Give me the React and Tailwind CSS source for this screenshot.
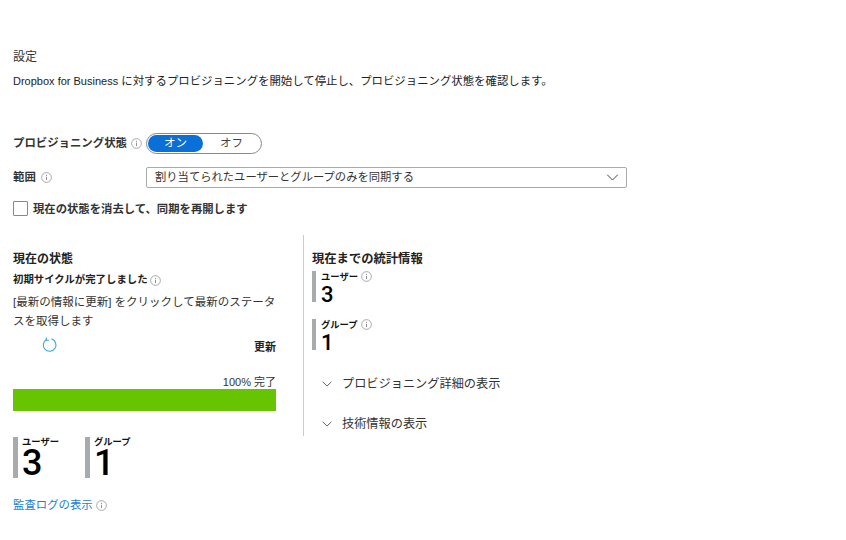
import React from 'react';

const FONT = "font-['Liberation_Sans','Noto_Sans_CJK_JP',sans-serif]";
const NUM = "font-['Roboto',sans-serif]";

function InfoIcon({ className = '' }) {
  return (
    <svg viewBox="0 0 12 12" className={`w-[11px] h-[11px] shrink-0 ${className}`} fill="none">
      <circle cx="6" cy="6" r="5.3" stroke="#8a8a8a" strokeWidth="0.8" />
      <circle cx="6" cy="3.6" r="0.6" fill="#777" />
      <path d="M6 5.2v3.6" stroke="#777" strokeWidth="0.9" />
    </svg>
  );
}

function Chevron({ className = '' }) {
  return (
    <svg viewBox="0 0 12 7" className={className} fill="none">
      <path d="M0.7 0.7 6 6l5.3-5.3" stroke="#444" strokeWidth="1" />
    </svg>
  );
}

function BigStat({ label, value, className = '' }) {
  return (
    <div className={`flex h-[41px] border-l-[5px] border-[#a7abae] pl-1 ${className}`}>
      <div className="flex flex-col">
        <span className="text-[9.3px] leading-[11px] font-bold text-[#111]">{label}</span>
        <span className={`text-[36px] leading-[30px] font-medium text-black ${NUM}`}>{value}</span>
      </div>
    </div>
  );
}

function SmallStat({ label, value, className = '' }) {
  return (
    <div className={`flex h-[31px] border-l-[4px] border-[#a7abae] pl-[5px] ${className}`}>
      <div className="flex flex-col">
        <span className="flex items-center gap-[3px] text-[9.3px] leading-[10px] font-bold text-[#111]">
          {label}
          <InfoIcon />
        </span>
        <span className={`mt-[3px] text-[22px] leading-[19px] font-medium text-black ${NUM}`}>{value}</span>
      </div>
    </div>
  );
}

function Expander({ label, className = '' }) {
  return (
    <div className={`flex items-center pl-[10px] ${className}`}>
      <Chevron className="w-[10px] h-[6px]" />
      <span className="ml-[10px] text-[12.2px] leading-[18px] text-[#333]">{label}</span>
    </div>
  );
}

export default function App() {
  return (
    <div className={`w-[846px] h-[540px] bg-white overflow-hidden pl-[13px] pt-[48px] text-[#222] ${FONT}`}>
      <div className="text-[12px] leading-[18px] text-[#333]">設定</div>
      <div className="mt-[6px] text-[11.4px] leading-[18px] text-[#222]">
        <span className="text-[11px]">Dropbox for Business</span> に対するプロビジョニングを開始して停止し、プロビジョニング状態を確認します。
      </div>

      {/* provisioning status */}
      <div className="flex items-center mt-[43px] h-[21px]">
        <div className="w-[133px] flex items-center gap-1">
          <span className="text-[11.4px] font-bold text-[#333] whitespace-nowrap">プロビジョニング状態</span>
          <InfoIcon />
        </div>
        <div className="flex w-[116px] h-[21px] rounded-full border border-[#8a8a8a] p-[1px] text-[11.5px] leading-[17px]">
          <div className="w-[55px] rounded-full bg-[#0a6fd6] text-white text-center">オン</div>
          <div className="flex-1 text-center text-[#444]">オフ</div>
        </div>
      </div>

      {/* scope */}
      <div className="flex items-center mt-[13px] h-[21px]">
        <div className="w-[133px] flex items-center gap-[5px]">
          <span className="text-[11.4px] font-bold text-[#333]">範囲</span>
          <InfoIcon />
        </div>
        <div className="flex items-center justify-between w-[481px] h-[21px] border border-[#aaa] rounded-[2px] pl-2 pr-[7px]">
          <span className="text-[11.3px] text-[#333]">割り当てられたユーザーとグループのみを同期する</span>
          <Chevron className="w-[13px] h-[7px]" />
        </div>
      </div>

      {/* restart checkbox */}
      <div className="flex items-center mt-[13px] h-[15px]">
        <div className="w-[15px] h-[15px] border border-[#888] rounded-[1px]" />
        <span className="ml-[5px] mt-[1px] text-[11.35px] font-bold text-[#333]">現在の状態を消去して、同期を再開します</span>
      </div>

      <div className="flex mt-[19px]">
        {/* current status */}
        <div className="w-[263px]">
          <div className="mt-[15px] text-[12px] leading-[18px] font-bold text-[#222]">現在の状態</div>
          <div className="mt-[4px] flex items-center gap-[2px] text-[10.4px] leading-[16px] font-bold text-[#222]">
            初期サイクルが完了しました
            <InfoIcon />
          </div>
          <p className="mt-[5px] text-[11.5px] leading-[19px] text-[#333]">
            [最新の情報に更新] をクリックして最新のステータスを取得します
          </p>
          <div className="flex items-center justify-between mt-[5px] h-[20px]">
            <svg viewBox="0 0 16 16" className="ml-[29px] mb-[2px] w-[16px] h-[16px]" fill="none">
              <path d="M4.6 2.4A6.3 6.3 0 1 0 9.5 1.9" stroke="#3aa9dc" strokeWidth="1.1" />
              <path d="M4.3 0.6v2.6h2.6" stroke="#3aa9dc" strokeWidth="1.1" />
            </svg>
            <span className="text-[11px] leading-[16px] mt-[2px] font-bold text-[#222]">更新</span>
          </div>
          <div className="mt-[20px] text-right text-[11px] leading-[13px] text-[#333]">100% 完了</div>
          <div className="h-[22px] bg-[#66c500]" />
          <div className="flex mt-[26px]">
            <BigStat label="ユーザー" value="3" className="w-[72px]" />
            <BigStat label="グループ" value="1" />
          </div>
          <div className="mt-[18px] flex items-center gap-[3px] text-[11.4px] leading-[18px] text-[#1a7fd4]">
            監査ログの表示
            <InfoIcon />
          </div>
        </div>

        {/* divider */}
        <div className="ml-[27px] h-[201px] border-l border-[#ccc]" />

        {/* stats to date */}
        <div className="ml-[8px]">
          <div className="mt-[15px] text-[12.3px] leading-[18px] font-bold text-[#222]">現在までの統計情報</div>
          <SmallStat label="ユーザー" value="3" className="mt-[3px]" />
          <SmallStat label="グループ" value="1" className="mt-[17px]" />
          <Expander label="プロビジョニング詳細の表示" className="mt-[25px]" />
          <Expander label="技術情報の表示" className="mt-[22px]" />
        </div>
      </div>
    </div>
  );
}
